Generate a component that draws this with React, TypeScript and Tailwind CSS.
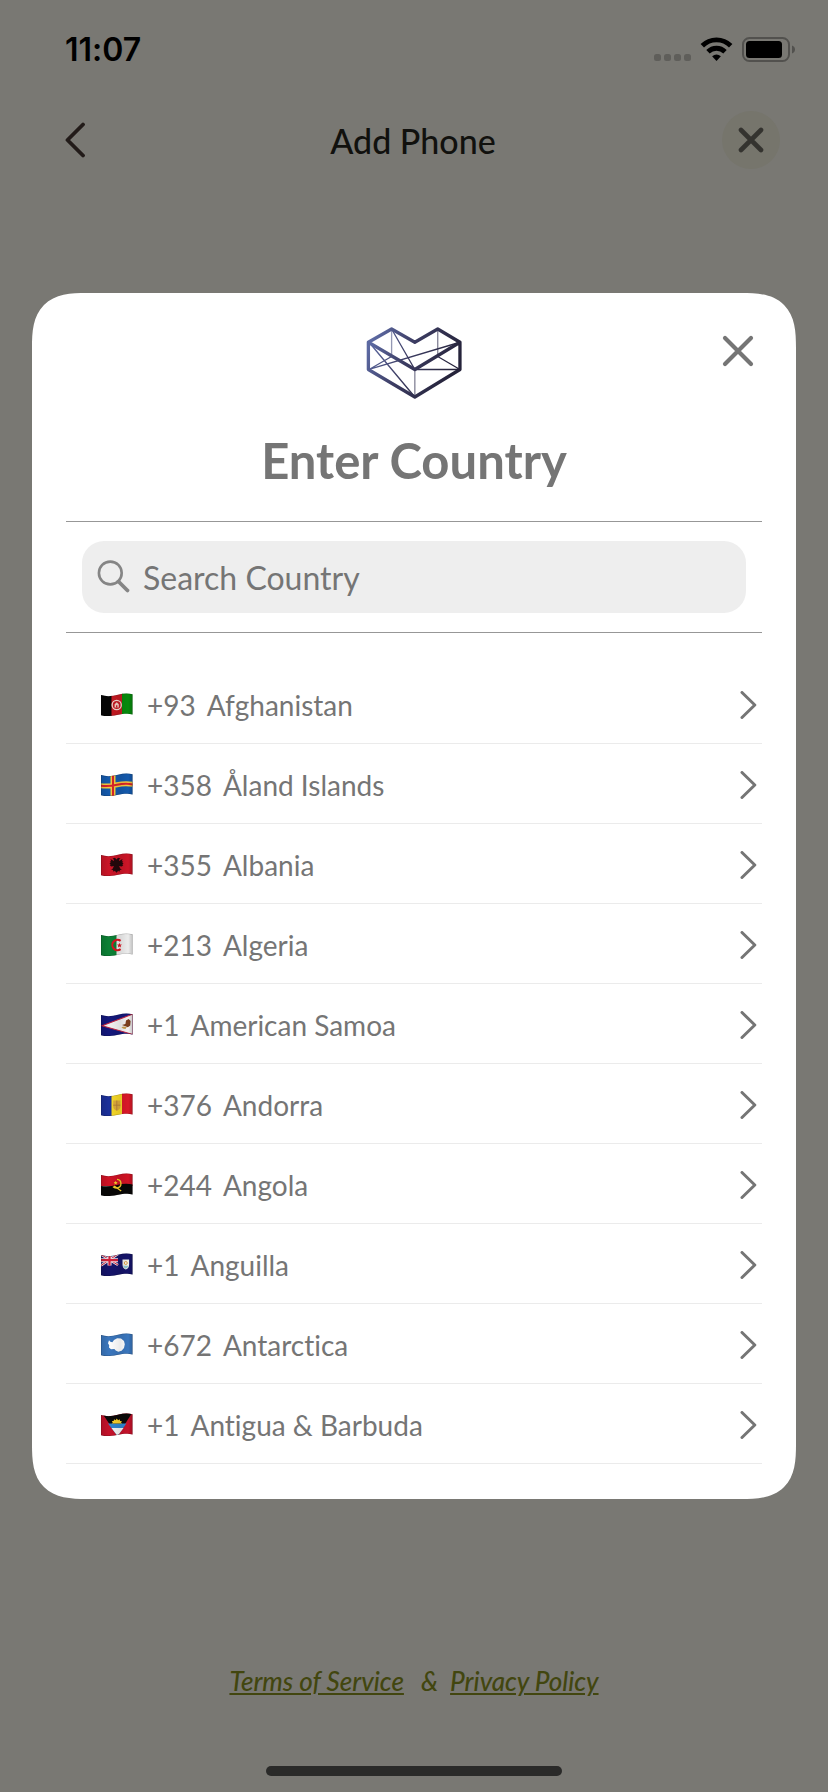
import { useState, type ReactNode } from "react";

type Country = {
  code: string;
  dial: string;
  name: string;
};

const COUNTRIES: Country[] = [
  { code: "AF", dial: "+93", name: "Afghanistan" },
  { code: "AX", dial: "+358", name: "Åland Islands" },
  { code: "AL", dial: "+355", name: "Albania" },
  { code: "DZ", dial: "+213", name: "Algeria" },
  { code: "AS", dial: "+1", name: "American Samoa" },
  { code: "AD", dial: "+376", name: "Andorra" },
  { code: "AO", dial: "+244", name: "Angola" },
  { code: "AI", dial: "+1", name: "Anguilla" },
  { code: "AQ", dial: "+672", name: "Antarctica" },
  { code: "AG", dial: "+1", name: "Antigua & Barbuda" },
];

// Flat 32x24 artwork, the wave is applied by <Flag />
const FLAG_ART: Record<string, ReactNode> = {
  AF: (
    <>
      <rect width="11" height="24" fill="#060606" />
      <rect x="10.5" width="11" height="24" fill="#c41a22" />
      <rect x="21" width="11" height="24" fill="#078a0c" />
      <circle cx="15.7" cy="12" r="4.6" fill="none" stroke="#f3d9cf" strokeWidth="1.3" />
      <path d="M13.6 14.5v-3.2l2.1-2 2.1 2v3.2z" fill="#f0cfc4" />
      <path d="M15 14.5v-2.3h1.4v2.3z" fill="#c8202a" />
    </>
  ),
  AX: (
    <>
      <rect width="32" height="24" fill="#1459ac" />
      <path d="M12 0v24M0 12.8Q8 13.6 16 11.8T32 11.4" fill="none" stroke="#f7c93c" strokeWidth="5" />
      <path d="M12 0v24M0 12.8Q8 13.6 16 11.8T32 11.4" fill="none" stroke="#d8232a" strokeWidth="2" />
    </>
  ),
  AL: (
    <>
      <rect width="32" height="24" fill="#cb1527" />
      <path
        d="M15.5 6.6l-1.5-1.8-2.4.7 1.4 1.2-.2 1.4L9.5 6l.7 2.4-1.4-.2.9 1.9-1.2.2 1.2 1.6-1 .7 1.8.9 2.4-.4-1.2 2.6-1.6.5 1.8.9.8 1.6 1.1-1 1.7 2.1 1.7-2.1 1.1 1 .8-1.6 1.8-.9-1.6-.5-1.2-2.6 2.4.4 1.8-.9-1-.7 1.2-1.6-1.2-.2.9-1.9-1.4.2.7-2.4-3.3 2.1-.2-1.4 1.4-1.2-2.4-.7z"
        fill="#24070b"
      />
    </>
  ),
  DZ: (
    <>
      <rect width="16" height="24" fill="#0c8035" />
      <rect x="15.5" width="17" height="24" fill="#ececec" />
      <path d="M19.6 7.8A5.2 5.2 0 1 0 19.6 16.2" fill="none" stroke="#dc1420" strokeWidth="2.1" />
      <path d="M18.4 9.8l.7 1.6 1.8.1-1.3 1.2.4 1.8-1.6-1-1.5 1 .4-1.8-1.3-1.2 1.8-.1z" fill="#dc1420" />
    </>
  ),
  AS: (
    <>
      <rect width="32" height="24" fill="#14187c" />
      <path d="M1 12.8L32 1v20.5z" fill="#f3f1f1" stroke="#c32340" strokeWidth="1.1" />
      <path d="M21 12l3.4-1 .6-3.4 2.6-1.7 2 2.2-.4 4.3-2.3 1.8z" fill="#7b3e1d" />
      <path d="M20.4 14l2.8-.6 2.6.9-1.4 1.6-2.5-.3z" fill="#c79a4b" />
    </>
  ),
  AD: (
    <>
      <rect width="11" height="24" fill="#1b309a" />
      <rect x="10.5" width="11" height="24" fill="#f6d828" />
      <rect x="21" width="11" height="24" fill="#d91828" />
      <path d="M12.2 7.5h7.2v6q0 3-3.6 4.2-3.6-1.2-3.6-4.2z" fill="#dcab3a" />
      <path d="M15.8 7.5v10M12.2 12.2h7.2" stroke="#b47a35" strokeWidth=".8" />
    </>
  ),
  AO: (
    <>
      <rect width="32" height="13" fill="#d01224" />
      <path d="M0 13Q8 14 16 12T32 11.5V24H0z" fill="#080706" />
      <path d="M16 6.4c5 .4 5.4 7.6.2 8.5-2 .3-3.4-.3-4.2-1.3M13.2 13l7 5" fill="none" stroke="#f5cf2b" strokeWidth="1.4" />
      <path d="M14.6 7.8l.6 1.3 1.4.1-1 1 .3 1.4-1.3-.7-1.2.7.3-1.4-1-1 1.4-.1z" fill="#f5cf2b" />
    </>
  ),
  AI: (
    <>
      <rect width="32" height="24" fill="#15146a" />
      <path d="M0 1.5l17 10.5M17 1L0 12.5" stroke="#f2e9ee" strokeWidth="2.6" />
      <path d="M0 1.5l17 10.5M17 1L0 12.5" stroke="#d3203a" strokeWidth="1" />
      <path d="M8.5 0v12.6M0 7.2h17" stroke="#f2e9ee" strokeWidth="4" />
      <path d="M8.5 0v12.6M0 7.2h17" stroke="#d3203a" strokeWidth="2.2" />
      <path d="M21.5 6.4h6.6v5.4q0 3.4-3.3 4.8-3.3-1.4-3.3-4.8z" fill="#f1efe9" />
      <path d="M22 12.8h5.6q-.7 2-2.8 3-2.1-1-2.8-3z" fill="#8fc3cf" />
      <circle cx="24.8" cy="10" r="1.5" fill="none" stroke="#d8973a" strokeWidth=".9" />
    </>
  ),
  AQ: (
    <>
      <rect width="32" height="24" fill="#3a76bd" />
      <path
        d="M8 7.2l1.4 1.6 2 .5 1.6-2.4 3.2-1.6 3.8.3 3 2.3.8 3.4-.8 3.6-2.4 2.9-3.3 1-2.6-1.2-1.3-1.6-3.4.2-2-1.8.2-2.2-1.2-2z"
        fill="#fff"
      />
    </>
  ),
  AG: (
    <>
      <rect width="32" height="24" fill="#c4122a" />
      <path d="M1 0h30L16.5 23z" fill="#0a0908" />
      <path d="M7 10.5h18.4L16.5 23z" fill="#2f86d0" />
      <path d="M10.5 15h12L16.5 23z" fill="#f5f5f5" />
      <path
        d="M10.6 10.6l1.2-1-1-1.6 1.9.1.3-1.9 1.6 1.1 1.2-1.7 1.3 1.7 1.6-1.1.4 1.9 1.8-.1-.9 1.6 1.2 1z"
        fill="#fbd028"
      />
    </>
  ),
};

function Flag({ code }: { code: string }) {
  const clip = `flag-clip-${code}`;
  const shade = `flag-shade-${code}`;
  return (
    <svg viewBox="0 0 32 24" className="h-6 w-8 shrink-0" aria-hidden="true">
      <defs>
        <clipPath id={clip}>
          <path d="M0 2C6 4 12 3 17 1.7S27 .2 31.5 1.2V21.6C27 20.2 22 21 16 22S5 23.6 0 22.2Z" />
        </clipPath>
        <linearGradient id={shade} x1="0" x2="1" y1="0" y2="0">
          <stop offset="0" stopColor="#000" stopOpacity=".12" />
          <stop offset=".25" stopColor="#000" stopOpacity="0" />
          <stop offset=".6" stopColor="#000" stopOpacity=".08" />
          <stop offset=".85" stopColor="#000" stopOpacity="0" />
          <stop offset="1" stopColor="#000" stopOpacity=".2" />
        </linearGradient>
      </defs>
      <g clipPath={`url(#${clip})`}>
        {FLAG_ART[code]}
        <rect width="32" height="24" fill={`url(#${shade})`} />
        <path
          d="M0 2C6 4 12 3 17 1.7S27 .2 31.5 1.2V21.6C27 20.2 22 21 16 22S5 23.6 0 22.2Z"
          fill="none"
          stroke="#000"
          strokeOpacity=".25"
        />
      </g>
    </svg>
  );
}

function Logo() {
  return (
    <svg viewBox="75 48 292 220" className="h-[73px] w-[97px]" aria-hidden="true">
      <defs>
        <linearGradient id="logo-ink" gradientUnits="userSpaceOnUse" x1="84" y1="110" x2="320" y2="220">
          <stop offset="0" stopColor="#5c69a2" />
          <stop offset=".45" stopColor="#3c3c62" />
          <stop offset="1" stopColor="#25233a" />
        </linearGradient>
      </defs>
      <g fill="none" stroke="url(#logo-ink)">
        <path
          d="M82 97L152 57L222 97L291 57L358 97V179L222 262L82 179ZM82 97L222 179L358 97"
          strokeWidth="10"
          strokeLinejoin="round"
        />
        <path d="M152 57L222 179M84 97L222 262M84 179L152 140M84 179L358 97M291 140L358 179M222 179H358" strokeWidth="4" />
        <path d="M152 57V140M291 57V140M222 179V262" strokeWidth="4" strokeOpacity=".6" />
      </g>
    </svg>
  );
}

function StatusBar() {
  return (
    <div className="flex h-[100px] items-center justify-between pl-[65px] pr-8">
      <span className="font-['Inter',sans-serif] text-[32px] leading-10 font-semibold text-black">11:07</span>
      <svg viewBox="0 0 144 28" className="h-7 w-36" aria-hidden="true">
        <g fill="#5f5e5a">
          <rect x="2" y="18" width="7" height="7" rx="2.5" />
          <rect x="12" y="18" width="7" height="7" rx="2.5" />
          <rect x="22" y="18" width="7" height="7" rx="2.5" />
          <rect x="32" y="18" width="7" height="7" rx="2.5" />
        </g>
        <g fill="none" stroke="#000" strokeWidth="4.8">
          <path d="M50.3 9.7a20 20 0 0 1 28.4 0" />
          <path d="M56 15.8a12 12 0 0 1 17 0" />
        </g>
        <path d="M60.1 20.2q4.4-3.6 8.8 0l-4.4 4.8z" fill="#000" />
        <rect x="91" y="2" width="46" height="23" rx="6.5" fill="none" stroke="#52514e" strokeWidth="2" />
        <rect x="94" y="5" width="36" height="17" rx="3.5" fill="#000" />
        <path d="M140 9.5q3 1.2 3 4t-3 4z" fill="#52514e" />
      </svg>
    </div>
  );
}

export default function App() {
  const [query, setQuery] = useState("");
  const matches = COUNTRIES.filter((c) => c.name.toLowerCase().includes(query.trim().toLowerCase()));

  return (
    <div className="flex min-h-screen flex-col bg-[#797873] font-['Lato',sans-serif] [font-variant-ligatures:none]">
      <StatusBar />

      <header className="flex h-20 items-center justify-between pr-12 pl-[46px]">
        <button type="button" aria-label="Back" className="flex size-[58px] items-center justify-center">
          <svg viewBox="0 0 20 36" className="h-9 w-5" aria-hidden="true">
            <path
              d="M18 2.5L2.5 18L18 33.5"
              fill="none"
              stroke="#221b19"
              strokeWidth="3.8"
              strokeLinecap="round"
              strokeLinejoin="round"
            />
          </svg>
        </button>
        <h1 className="pt-[2px] font-['Lato_Medium','Lato',sans-serif] text-[34px] leading-10 font-medium text-[#11110e]">
          Add Phone
        </h1>
        <button
          type="button"
          aria-label="Close"
          className="flex size-[58px] items-center justify-center rounded-full bg-[#76756c]"
        >
          <svg viewBox="0 0 26 26" className="size-[26px]" aria-hidden="true">
            <path d="M3 3L23 23M23 3L3 23" stroke="#34332f" strokeWidth="4.6" strokeLinecap="round" />
          </svg>
        </button>
      </header>

      <section
        role="dialog"
        aria-labelledby="country-title"
        className="relative mx-8 mt-[113px] rounded-[44px] bg-white px-[34px] pt-[33px] pb-[35px] text-[#757575] supports-[corner-shape:squircle]:rounded-[55px] supports-[corner-shape:squircle]:[corner-shape:superellipse(1.5)]"
      >
        <button
          type="button"
          aria-label="Close country picker"
          className="absolute top-8 right-8 flex size-[52px] items-center justify-center"
        >
          <svg viewBox="0 0 32 32" className="size-8" aria-hidden="true">
            <path d="M3 3L29 29M29 3L3 29" stroke="currentColor" strokeWidth="4.2" strokeLinecap="round" />
          </svg>
        </button>

        <div className="flex flex-col items-center gap-[33px] border-b border-[#979797] pb-[33px]">
          <Logo />
          <h2 id="country-title" className="text-[49px] leading-14 font-bold">
            Enter Country
          </h2>
        </div>

        <div className="border-b border-[#979797] px-4 py-[19px]">
          <label className="flex h-[72px] items-center gap-3 rounded-[22px] bg-[#eeeeee] px-[15px]">
            <svg viewBox="0 0 34 34" className="size-[34px] shrink-0" aria-hidden="true">
              <circle cx="13.3" cy="13" r="11.4" fill="none" stroke="#858585" strokeWidth="2.6" />
              <path d="M21.5 21.5L30.5 30.5" stroke="#858585" strokeWidth="3.8" strokeLinecap="round" />
            </svg>
            <input
              type="text"
              aria-label="Search Country"
              placeholder="Search Country"
              value={query}
              onChange={(e) => setQuery(e.target.value)}
              className="min-w-0 flex-1 bg-transparent pt-[2px] text-[32px] leading-10 outline-none placeholder:text-[#757575]"
            />
          </label>
        </div>

        <ul className="mt-[31px]">
          {matches.map((c) => (
            <li key={c.code} className="border-b border-[#ebebeb]">
              <button type="button" className="flex h-[79px] w-full items-center pt-[3px] pr-[5px] pl-[35px] text-left">
                <Flag code={c.code} />
                <span className="ml-[14px] text-[28px] leading-10">{c.dial}</span>
                <span className="ml-[11px] flex-1 text-[28px] leading-10">{c.name}</span>
                <svg viewBox="0 0 18 28" className="h-7 w-[18px]" aria-hidden="true">
                  <path
                    d="M3 1.5L15.8 14L3 26.5"
                    fill="none"
                    stroke="currentColor"
                    strokeWidth="3"
                    strokeLinecap="round"
                    strokeLinejoin="round"
                  />
                </svg>
              </button>
            </li>
          ))}
        </ul>
      </section>

      <footer className="mt-auto flex flex-col items-center pb-4">
        <p className="flex items-baseline font-['Lato_Medium','Lato',sans-serif] text-[26px] leading-8 font-medium text-[#42460f] italic">
          <a href="#terms" className="underline">
            Terms of Service
          </a>
          <span className="mr-3 ml-[17px]">&amp;</span>
          <a href="#privacy" className="underline">
            Privacy Policy
          </a>
        </p>
        <div className="mt-[69px] h-[10px] w-[296px] rounded-full bg-[#2a2a29]" />
      </footer>
    </div>
  );
}
